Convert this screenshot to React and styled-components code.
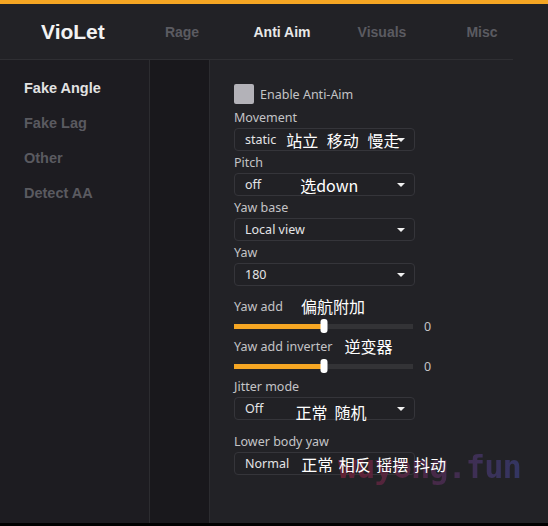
import React from "react";
import styled, { createGlobalStyle } from "styled-components";

const GlobalStyle = createGlobalStyle`
  html, body {
    margin: 0;
    padding: 0;
    background: #000;
  }
  #root {
    height: 523px;
    overflow: hidden;
  }
`;

const tabs = ["Rage", "Anti Aim", "Visuals", "Misc"];
const subTabs = ["Fake Angle", "Fake Lag", "Other", "Detect AA"];

const App = () => {
  return (
    <SWrap>
      <GlobalStyle />
      <STopBar />
      <SHeader>
        <SHeaderRow>
          <SLogo>VioLet</SLogo>
          {tabs.map((t) => (
            <STab key={t} active={t === "Anti Aim"}>
              {t}
            </STab>
          ))}
        </SHeaderRow>
        <SHeaderLine />
      </SHeader>
      <SBody>
        <SSidebar>
          {subTabs.map((t) => (
            <SSubTab key={t} active={t === "Fake Angle"}>
              {t}
            </SSubTab>
          ))}
        </SSidebar>
        <SGutter />
        <SContent>
          <SCheckRow>
            <SCheckbox />
            <span>Enable Anti-Aim</span>
          </SCheckRow>

          <SLabel top={4}>Movement</SLabel>
          <SSelect>
            <SSelectText>
              static<SNote left={10} spacing={5}>站立 移动 慢走</SNote>
            </SSelectText>
            <SArrow />
          </SSelect>

          <SLabel>Pitch</SLabel>
          <SSelect>
            <SSelectText>
              off<SNote left={39}>选down</SNote>
            </SSelectText>
            <SArrow />
          </SSelect>

          <SLabel>Yaw base</SLabel>
          <SSelect>
            <SSelectText>Local view</SSelectText>
            <SArrow />
          </SSelect>

          <SLabel>Yaw</SLabel>
          <SSelect>
            <SSelectText>180</SSelectText>
            <SArrow />
          </SSelect>

          <SLabel top={11}>
            Yaw add<SNote left={18}>偏航附加</SNote>
          </SLabel>
          <Slider value={50} />

          <SLabel top={4}>
            Yaw add inverter<SNote left={12}>逆变器</SNote>
          </SLabel>
          <Slider value={50} />

          <SLabel top={4}>Jitter mode</SLabel>
          <SSelect>
            <SSelectText>
              Off<SNote left={32} down={3}>正常&nbsp;&nbsp;随机</SNote>
            </SSelectText>
            <SArrow />
          </SSelect>

          <SLabel top={12}>Lower body yaw</SLabel>
          <SSelect>
            <SSelectText>
              Normal<SNote left={12} spacing={2}>正常 相反 摇摆 抖动</SNote>
            </SSelectText>
          </SSelect>
        </SContent>
      </SBody>
      <SWatermark>wuyong.fun</SWatermark>
    </SWrap>
  );
};

const Slider = ({ value }) => (
  <SSliderRow>
    <STrack>
      <SFill style={{ width: `${value}%` }} />
      <SThumb style={{ left: `${value}%` }} />
    </STrack>
    <SValue>0</SValue>
  </SSliderRow>
);

const SWrap = styled.div`
  position: relative;
  width: 548px;
  height: 523px;
  display: flex;
  flex-direction: column;
  background: #222226;
  font-family: "Noto Sans", "Noto Sans CJK SC", sans-serif;
`;

const STopBar = styled.div`
  height: 4px;
  background: #f5a623;
`;

const SHeader = styled.div`
  height: 56px;
  display: flex;
  flex-direction: column;
`;

const SHeaderRow = styled.div`
  flex: 1;
  display: grid;
  grid-template-columns: 132px repeat(4, 100px);
  align-items: center;
  font-family: "Liberation Sans", Arial, sans-serif;
  font-weight: bold;
`;

const SHeaderLine = styled.div`
  width: 513px;
  height: 1px;
  background: #2f2f33;
`;

const SLogo = styled.div`
  padding-left: 41px;
  font-size: 21px;
  color: #f2f2f2;
`;

const STab = styled.div`
  text-align: center;
  font-size: 14px;
  color: ${(p) => (p.active ? "#e8e8e8" : "#5b5b61")};
`;

const SBody = styled.div`
  flex: 1;
  display: flex;
  min-height: 0;
`;

const SSidebar = styled.div`
  width: 150px;
  border-right: 1px solid #2c2c30;
  background: #1d1c21;
  padding: 20px 0 0 24px;
  box-sizing: border-box;
  display: flex;
  flex-direction: column;
  gap: 18px;
  font-family: "Liberation Sans", Arial, sans-serif;
  font-weight: bold;
`;

const SSubTab = styled.div`
  font-size: 14.5px;
  line-height: 17px;
  color: ${(p) => (p.active ? "#e2e2e2" : "#5a5a60")};
`;

const SGutter = styled.div`
  width: 60px;
  box-sizing: border-box;
  border-right: 1px solid #2c2c30;
  background: #19181c;
`;

const SContent = styled.div`
  flex: 1;
  padding: 24px 0 0 24px;
  display: flex;
  flex-direction: column;
  font-size: 12.5px;
  color: #c4c4c6;
`;

const SCheckRow = styled.div`
  display: flex;
  align-items: center;
  gap: 6px;
  height: 20px;
`;

const SCheckbox = styled.div`
  width: 20px;
  height: 20px;
  border-radius: 2px;
  background: #b3b2b8;
`;

const SLabel = styled.div`
  display: flex;
  align-items: center;
  height: 18px;
  margin-top: ${(p) => p.top ?? 2}px;
  margin-bottom: 2px;
  white-space: nowrap;
`;

const SNote = styled.span`
  position: relative;
  z-index: 2;
  top: ${(p) => p.down ?? 0}px;
  margin-left: ${(p) => p.left ?? 0}px;
  word-spacing: ${(p) => p.spacing ?? 0}px;
  font-family: "Noto Sans CJK SC", "Noto Sans", sans-serif;
  font-size: 16px;
  color: #ffffff;
  white-space: pre;
`;

const SSelect = styled.div`
  position: relative;
  width: 181px;
  height: 23px;
  box-sizing: border-box;
  border: 1px solid #35353a;
  border-radius: 4px;
  background: #212125;
  display: flex;
  align-items: center;
  padding: 0 9px 0 10px;
  color: #e4e4e6;
`;

const SSelectText = styled.div`
  flex: 1;
  display: flex;
  align-items: center;
  white-space: nowrap;
`;

const SArrow = styled.div`
  position: absolute;
  right: 9px;
  top: 9px;
  z-index: 3;
  width: 0;
  height: 0;
  border-left: 4px solid transparent;
  border-right: 4px solid transparent;
  border-top: 4px solid #f0f0f0;
`;

const SSliderRow = styled.div`
  display: flex;
  align-items: center;
  height: 14px;
  gap: 11px;
  margin-top: 2px;
`;

const STrack = styled.div`
  position: relative;
  width: 179px;
  height: 5px;
  background: #333336;
`;

const SFill = styled.div`
  height: 100%;
  background: #f5a623;
`;

const SThumb = styled.div`
  position: absolute;
  top: 50%;
  width: 7px;
  height: 14px;
  border-radius: 3px;
  background: #ffffff;
  transform: translate(-50%, -50%);
`;

const SValue = styled.span`
  font-size: 12.5px;
  color: #c4c4c6;
`;

const SWatermark = styled.div`
  position: absolute;
  z-index: 1;
  left: 338px;
  top: 448px;
  font-family: "DejaVu Sans Mono", monospace;
  font-size: 32px;
  font-weight: bold;
  letter-spacing: -1px;
  background: linear-gradient(90deg, #6e2236 0%, #52294a 45%, #373a6e 100%);
  -webkit-background-clip: text;
  background-clip: text;
  color: transparent;
  opacity: 0.85;
  pointer-events: none;
`;

export default App;
